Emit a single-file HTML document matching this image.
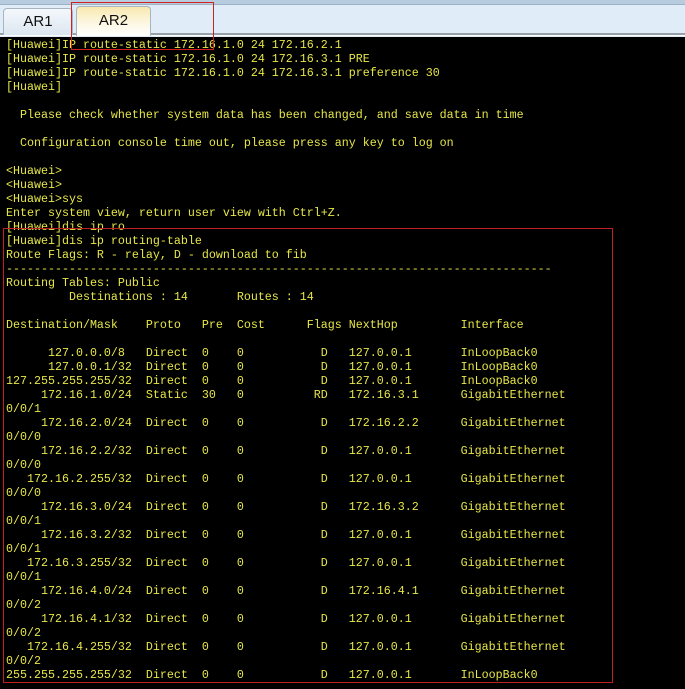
<!DOCTYPE html>
<html><head><meta charset="utf-8"><style>
html,body{margin:0;padding:0;width:685px;height:689px;overflow:hidden;background:#000;position:relative}
.top{position:absolute;left:0;top:0;width:685px;height:37px;background:#e0ecf8}
.top .s{position:absolute;left:0;top:0;width:685px;height:4px;background:#b8cce0;border-bottom:1px solid #9fb2c4}
.top .b{position:absolute;left:0;top:33px;width:685px;height:2px;background:#98a0a8;border-bottom:1px solid #fff}
.tab{position:absolute;font:15px "Liberation Sans",sans-serif;color:#111;text-align:center;border:1px solid #a8b4c0;border-bottom:none;border-radius:4px 4px 0 0}
.t1{left:3px;top:8px;width:68px;height:26px;line-height:26px;background:linear-gradient(#f4f8fc,#dce6f0)}
.t2{left:76px;top:6px;width:73px;height:29px;line-height:28px;background:linear-gradient(#f8e8b0,#fdf8e6 60%,#fff);z-index:2}
pre{position:absolute;left:6px;top:38px;margin:0;font:11.67px/14px "Liberation Mono",monospace;color:#e6e64a;white-space:pre}
.r1{position:absolute;left:71px;top:2px;width:141px;height:46px;border:1px solid #d02020;z-index:5}
.r2{position:absolute;left:3px;top:228px;width:608px;height:453px;border:1px solid #c02020}
</style></head><body>
<div class="top"><div class="s"></div><div class="b"></div></div>
<div class="tab t1">AR1</div>
<div class="tab t2">AR2</div>
<pre>[Huawei]IP route-static 172.16.1.0 24 172.16.2.1
[Huawei]IP route-static 172.16.1.0 24 172.16.3.1 PRE
[Huawei]IP route-static 172.16.1.0 24 172.16.3.1 preference 30
[Huawei]

  Please check whether system data has been changed, and save data in time

  Configuration console time out, please press any key to log on

&lt;Huawei&gt;
&lt;Huawei&gt;
&lt;Huawei&gt;sys
Enter system view, return user view with Ctrl+Z.
[Huawei]dis ip ro
[Huawei]dis ip routing-table
Route Flags: R - relay, D - download to fib
------------------------------------------------------------------------------
Routing Tables: Public
         Destinations : 14       Routes : 14

Destination/Mask    Proto   Pre  Cost      Flags NextHop         Interface

      127.0.0.0/8   Direct  0    0           D   127.0.0.1       InLoopBack0
      127.0.0.1/32  Direct  0    0           D   127.0.0.1       InLoopBack0
127.255.255.255/32  Direct  0    0           D   127.0.0.1       InLoopBack0
     172.16.1.0/24  Static  30   0          RD   172.16.3.1      GigabitEthernet
0/0/1
     172.16.2.0/24  Direct  0    0           D   172.16.2.2      GigabitEthernet
0/0/0
     172.16.2.2/32  Direct  0    0           D   127.0.0.1       GigabitEthernet
0/0/0
   172.16.2.255/32  Direct  0    0           D   127.0.0.1       GigabitEthernet
0/0/0
     172.16.3.0/24  Direct  0    0           D   172.16.3.2      GigabitEthernet
0/0/1
     172.16.3.2/32  Direct  0    0           D   127.0.0.1       GigabitEthernet
0/0/1
   172.16.3.255/32  Direct  0    0           D   127.0.0.1       GigabitEthernet
0/0/1
     172.16.4.0/24  Direct  0    0           D   172.16.4.1      GigabitEthernet
0/0/2
     172.16.4.1/32  Direct  0    0           D   127.0.0.1       GigabitEthernet
0/0/2
   172.16.4.255/32  Direct  0    0           D   127.0.0.1       GigabitEthernet
0/0/2
255.255.255.255/32  Direct  0    0           D   127.0.0.1       InLoopBack0</pre>
<div class="r1"></div>
<div class="r2"></div>
</body></html>
